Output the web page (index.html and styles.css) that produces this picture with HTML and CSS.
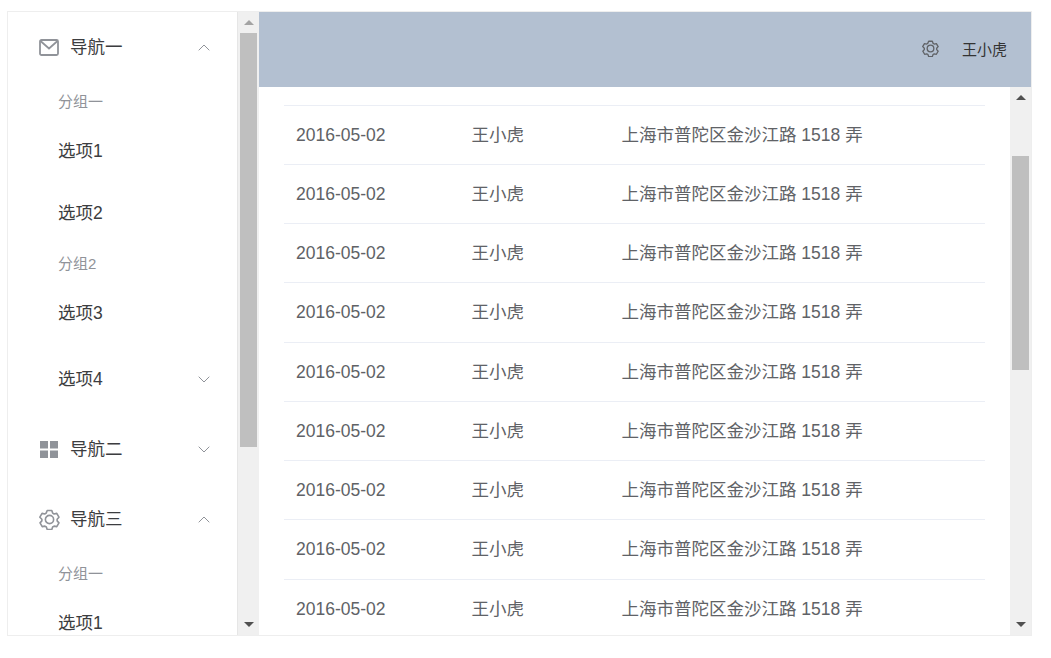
FILE: index.html
```html
<!DOCTYPE html>
<html lang="zh-CN">
<head>
<meta charset="utf-8">
<title>Layout</title>
<link rel="stylesheet" href="styles.css">
</head>
<body>
<svg class="defs" width="0" height="0" aria-hidden="true">
  <symbol id="gear" viewBox="0 0 22 22">
    <path d="M8.6 1.6h4.8l.9 2.7 1.5.9 2.800-.6 2.300 4-1.900 2.100v1.700l1.900 2.100-2.300 4-2.800-.6-1.500.9-.9 2.700H8.600l-.9-2.700-1.500-.9-2.800.6-2.300-4 1.900-2.100v-1.700L.9 8.600l2.300-4 2.800.6 1.500-.9z" fill="none" stroke="currentColor" stroke-width="1.700" stroke-linejoin="round"/>
    <circle cx="11" cy="11" r="4.300" fill="none" stroke="currentColor" stroke-width="1.700"/>
  </symbol>
  <symbol id="up" viewBox="0 0 12 7"><path d="M.7 6.300 6 1l5.300 5.300" fill="none" stroke="currentColor" stroke-width="1"/></symbol>
  <symbol id="down" viewBox="0 0 12 7"><path d="M.7.700 6 6l5.300-5.300" fill="none" stroke="currentColor" stroke-width="1"/></symbol>
</svg>
<div class="app">
  <aside class="aside">
    <nav class="menu">
      <div class="title">
        <svg class="icon" width="20" height="17" viewBox="0 0 20 17"><rect x="1" y="1" width="18" height="15" rx="1.500" fill="none" stroke="currentColor" stroke-width="1.800"/><path d="M1.500 2 10 9.500 18.500 2" fill="none" stroke="currentColor" stroke-width="1.700"/></svg>
        <span class="label">导航一</span>
        <svg class="chev" width="12" height="7"><use href="#up"/></svg>
      </div>
      <div class="group">分组一</div>
      <div class="item">选项1</div>
      <div class="item">选项2</div>
      <div class="group">分组2</div>
      <div class="item">选项3</div>
      <div class="sub">
        <span class="label">选项4</span>
        <svg class="chev" width="12" height="7"><use href="#down"/></svg>
      </div>
      <div class="title">
        <svg class="icon" width="20" height="18" viewBox="0 0 20 18"><path d="M1 1h8v7.500H1zM11 1h8v7.500h-8zM1 10.500h8V18H1zM11 10.500h8V18h-8z" fill="currentColor"/></svg>
        <span class="label">导航二</span>
        <svg class="chev" width="12" height="7"><use href="#down"/></svg>
      </div>
      <div class="title">
        <svg class="icon icon-gear" width="21" height="21"><use href="#gear"/></svg>
        <span class="label">导航三</span>
        <svg class="chev" width="12" height="7"><use href="#up"/></svg>
      </div>
      <div class="group">分组一</div>
      <div class="item">选项1</div>
    </nav>
    <div class="scrollbar">
      <div class="arrow"><span class="tri-up tri-muted"></span></div>
      <div class="thumb thumb-side"></div>
      <div class="track"></div>
      <div class="arrow"><span class="tri-down"></span></div>
    </div>
  </aside>
  <div class="main">
    <header class="header">
      <svg class="head-gear" width="17" height="17"><use href="#gear"/></svg>
      <span>王小虎</span>
    </header>
    <div class="body">
      <div class="table-wrap">
        <div class="row"><span class="c-date">2016-05-02</span><span class="c-name">王小虎</span><span>上海市普陀区金沙江路 1518 弄</span></div>
        <div class="row"><span class="c-date">2016-05-02</span><span class="c-name">王小虎</span><span>上海市普陀区金沙江路 1518 弄</span></div>
        <div class="row"><span class="c-date">2016-05-02</span><span class="c-name">王小虎</span><span>上海市普陀区金沙江路 1518 弄</span></div>
        <div class="row"><span class="c-date">2016-05-02</span><span class="c-name">王小虎</span><span>上海市普陀区金沙江路 1518 弄</span></div>
        <div class="row"><span class="c-date">2016-05-02</span><span class="c-name">王小虎</span><span>上海市普陀区金沙江路 1518 弄</span></div>
        <div class="row"><span class="c-date">2016-05-02</span><span class="c-name">王小虎</span><span>上海市普陀区金沙江路 1518 弄</span></div>
        <div class="row"><span class="c-date">2016-05-02</span><span class="c-name">王小虎</span><span>上海市普陀区金沙江路 1518 弄</span></div>
        <div class="row"><span class="c-date">2016-05-02</span><span class="c-name">王小虎</span><span>上海市普陀区金沙江路 1518 弄</span></div>
        <div class="row"><span class="c-date">2016-05-02</span><span class="c-name">王小虎</span><span>上海市普陀区金沙江路 1518 弄</span></div>
      </div>
      <div class="scrollbar">
        <div class="arrow"><span class="tri-up"></span></div>
        <div class="thumb thumb-main"></div>
        <div class="track"></div>
        <div class="arrow"><span class="tri-down"></span></div>
      </div>
    </div>
  </div>
</div>
</body>
</html>
```

FILE: styles.css
```css
* { box-sizing: border-box; }
html, body { margin: 0; height: 100%; overflow: hidden; background: #fff; }
body {
  padding: 11px 0 0 7px;
  font-family: "Liberation Sans", "Noto Sans CJK SC", sans-serif;
  font-size: 17.5px;
  line-height: 22px;
  color: #3c3d40;
}
.defs { position: absolute; }
.app {
  display: flex;
  width: 1025px;
  height: 625px;
  border: 1px solid #eee;
}
.aside { display: flex; flex: 0 0 251px; height: 100%; overflow: hidden; }
.menu {
  flex: 0 0 230px;
  height: 100%;
  overflow: hidden;
  border-right: 1px solid #e6e6e6;
}
.title, .sub {
  display: flex;
  align-items: center;
  height: 70px;
  padding: 0 27px 0 31px;
  flex-shrink: 0;
}
.sub { padding-left: 50px; }
.icon { color: #909399; margin-right: 11px; flex-shrink: 0; }
.icon-gear { margin-right: 10px; }
.label { flex: 1; }
.chev { color: #909399; flex: 0 0 12px; }
.group {
  display: flex;
  align-items: center;
  height: 38px;
  padding: 2px 0 0 50px;
  font-size: 15px;
  color: #909399;
}
.item {
  display: flex;
  align-items: center;
  height: 62px;
  padding-left: 50px;
}
.scrollbar {
  display: flex;
  flex: 0 0 21px;
  flex-direction: column;
  height: 100%;
  background: #f0f0f0;
  padding: 0 2px;
}
.arrow {
  display: flex;
  align-items: center;
  justify-content: center;
  flex: 0 0 21px;
}
.tri-up, .tri-down {
  width: 0;
  height: 0;
  border-left: 5px solid transparent;
  border-right: 5px solid transparent;
}
.tri-up { border-bottom: 5px solid #505050; }
.tri-down { border-top: 5px solid #505050; }
.tri-muted { border-bottom-color: #a3a3a3; }
.thumb { background: #bfbfbf; }
.thumb-side { flex: 0 0 414px; }
.thumb-main { flex: 0 0 214px; margin-top: 48px; }
.track { flex: 1; }
.main { display: flex; flex: 1; min-width: 0; flex-direction: column; }
.header {
  display: flex;
  align-items: center;
  justify-content: flex-end;
  flex: 0 0 75px;
  padding-right: 24px;
  background: #b3c0d1;
  font-size: 15px;
  color: #333;
}
.head-gear { color: #606266; margin: 0 23px 2px 0; }
.body { display: flex; flex: 1; min-height: 0; }
.table-wrap {
  flex: 1;
  min-width: 0;
  overflow: hidden;
  padding: 17.7px 25px 0;
}
.row {
  display: flex;
  align-items: center;
  height: 59.25px;
  padding: 0 0 0.2px 12px;
  border-top: 1px solid #ebeef5;
  color: #606266;
}
.c-date { flex: 0 0 175.5px; }
.c-name { flex: 0 0 150px; }
```
